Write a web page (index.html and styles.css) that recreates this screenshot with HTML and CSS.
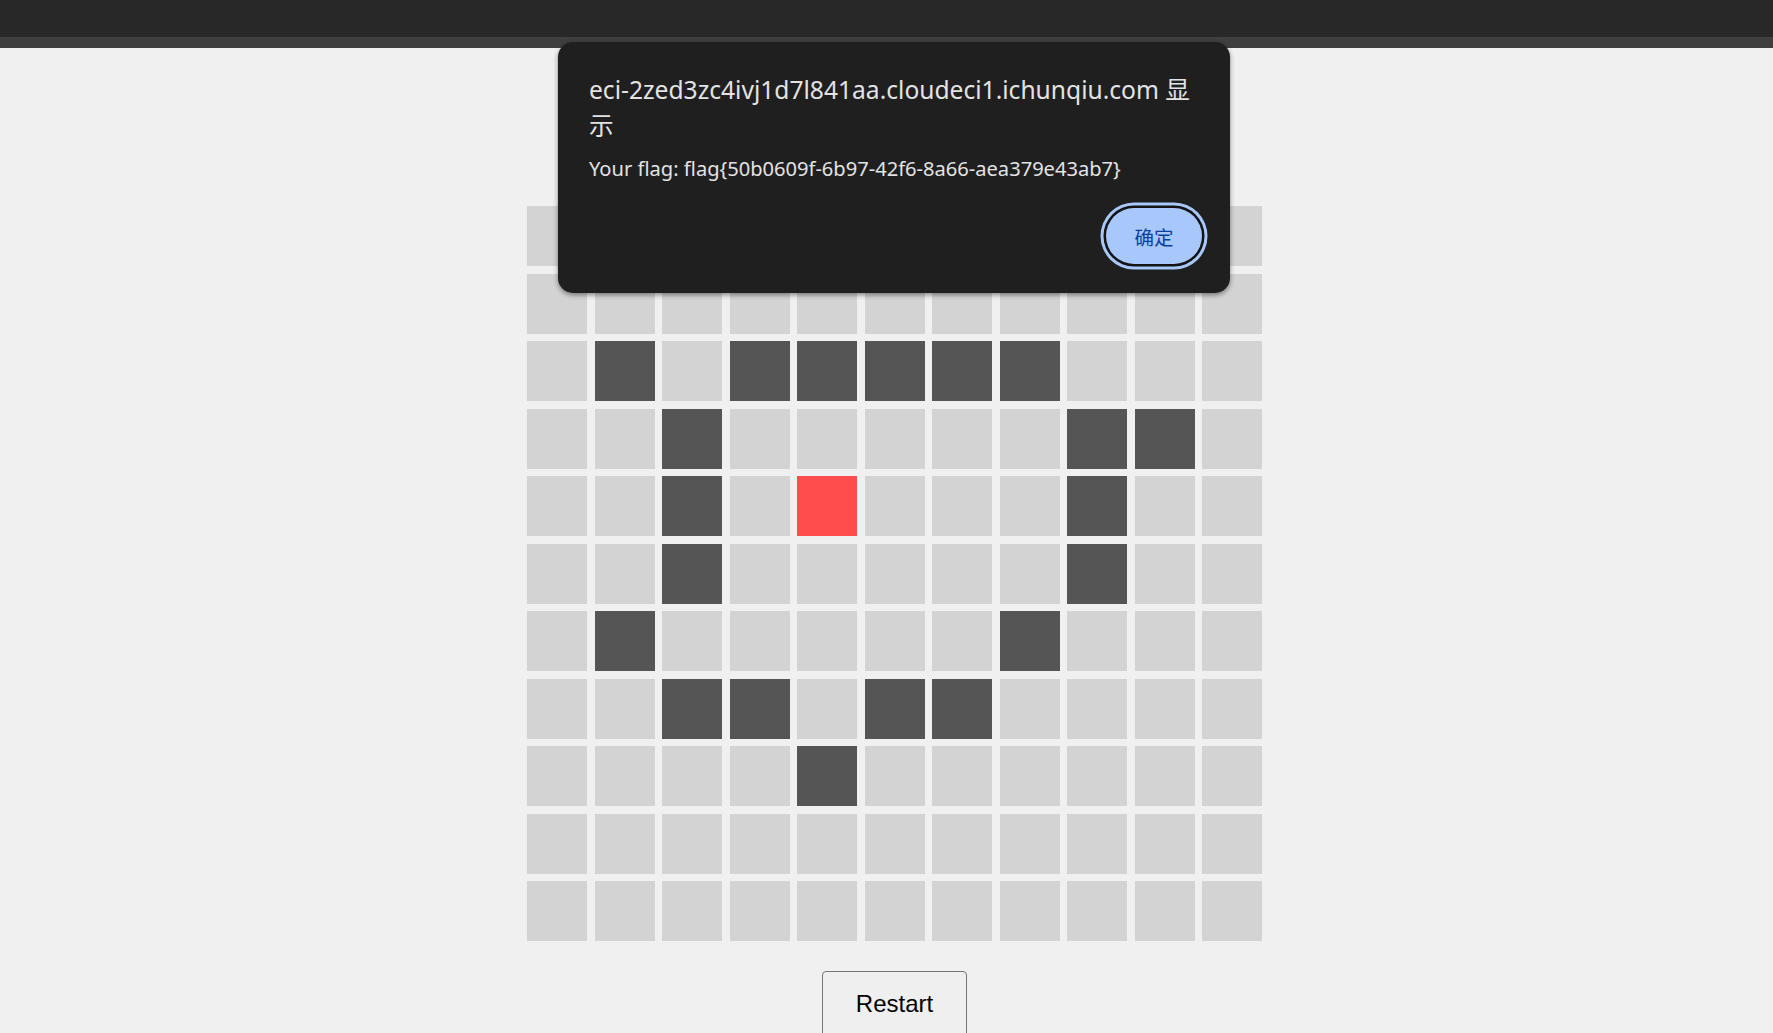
FILE: index.html
```html
<!DOCTYPE html>
<html lang="zh">
<head>
<meta charset="utf-8">
<title>Game</title>
<link rel="stylesheet" href="styles.css">
</head>
<body>
<div class="topbar"></div>
<div class="strip"></div>
<main class="main">
  <div class="grid">
    <div class="cell"></div><div class="cell"></div><div class="cell"></div><div class="cell"></div><div class="cell"></div><div class="cell"></div><div class="cell"></div><div class="cell"></div><div class="cell"></div><div class="cell"></div><div class="cell"></div>
    <div class="cell"></div><div class="cell"></div><div class="cell"></div><div class="cell"></div><div class="cell"></div><div class="cell"></div><div class="cell"></div><div class="cell"></div><div class="cell"></div><div class="cell"></div><div class="cell"></div>
    <div class="cell"></div><div class="cell wall"></div><div class="cell"></div><div class="cell wall"></div><div class="cell wall"></div><div class="cell wall"></div><div class="cell wall"></div><div class="cell wall"></div><div class="cell"></div><div class="cell"></div><div class="cell"></div>
    <div class="cell"></div><div class="cell"></div><div class="cell wall"></div><div class="cell"></div><div class="cell"></div><div class="cell"></div><div class="cell"></div><div class="cell"></div><div class="cell wall"></div><div class="cell wall"></div><div class="cell"></div>
    <div class="cell"></div><div class="cell"></div><div class="cell wall"></div><div class="cell"></div><div class="cell cat"></div><div class="cell"></div><div class="cell"></div><div class="cell"></div><div class="cell wall"></div><div class="cell"></div><div class="cell"></div>
    <div class="cell"></div><div class="cell"></div><div class="cell wall"></div><div class="cell"></div><div class="cell"></div><div class="cell"></div><div class="cell"></div><div class="cell"></div><div class="cell wall"></div><div class="cell"></div><div class="cell"></div>
    <div class="cell"></div><div class="cell wall"></div><div class="cell"></div><div class="cell"></div><div class="cell"></div><div class="cell"></div><div class="cell"></div><div class="cell wall"></div><div class="cell"></div><div class="cell"></div><div class="cell"></div>
    <div class="cell"></div><div class="cell"></div><div class="cell wall"></div><div class="cell wall"></div><div class="cell"></div><div class="cell wall"></div><div class="cell wall"></div><div class="cell"></div><div class="cell"></div><div class="cell"></div><div class="cell"></div>
    <div class="cell"></div><div class="cell"></div><div class="cell"></div><div class="cell"></div><div class="cell wall"></div><div class="cell"></div><div class="cell"></div><div class="cell"></div><div class="cell"></div><div class="cell"></div><div class="cell"></div>
    <div class="cell"></div><div class="cell"></div><div class="cell"></div><div class="cell"></div><div class="cell"></div><div class="cell"></div><div class="cell"></div><div class="cell"></div><div class="cell"></div><div class="cell"></div><div class="cell"></div>
    <div class="cell"></div><div class="cell"></div><div class="cell"></div><div class="cell"></div><div class="cell"></div><div class="cell"></div><div class="cell"></div><div class="cell"></div><div class="cell"></div><div class="cell"></div><div class="cell"></div>
  </div>
  <button class="restart" type="button">Restart</button>
</main>
<div class="dialog" role="alertdialog">
  <div class="dialog-title">eci-2zed3zc4ivj1d7l841aa.cloudeci1.ichunqiu.com 显<br>示</div>
  <div class="dialog-msg">Your flag: flag{50b0609f-6b97-42f6-8a66-aea379e43ab7}</div>
  <div class="dialog-actions"><button class="ok" type="button">确定</button></div>
</div>
</body>
</html>
```
FILE: styles.css
```css
html, body {
  margin: 0;
  padding: 0;
}
body {
  background: #f0f0f0;
  font-family: "Liberation Sans", Arial, sans-serif;
  height: 1033px;
  overflow: hidden;
  position: relative;
}
.topbar {
  height: 37px;
  background: #282828;
}
.strip {
  height: 11px;
  background: #3f3f3f;
}
.main {
  display: flex;
  flex-direction: column;
  align-items: center;
  padding-left: 16px;
  padding-top: 158px;
}
.grid {
  display: grid;
  grid-template-columns: repeat(11, 60px);
  grid-auto-rows: 60px;
  gap: 7.5px;
}
.cell {
  background: #d3d3d3;
}
.cell.wall {
  background: #555555;
}
.cell.cat {
  background: #ff4d4d;
}
.restart {
  margin-top: 30px;
  font-family: "Liberation Sans", Arial, sans-serif;
  font-size: 24px;
  color: #000;
  padding: 18px 33px 18px;
  background: #efefef;
  border: 1.5px solid #767676;
  border-radius: 4px;
}
.dialog {
  position: absolute;
  left: 558px;
  top: 42px;
  width: 672px;
  height: 251px;
  box-sizing: border-box;
  padding: 30px 28px 29px 31px;
  background: #1f1f1f;
  border-radius: 15px;
  box-shadow: 0 2px 5px rgba(0, 0, 0, 0.45);
  color: #e3e3e3;
  font-family: "Noto Sans", "Noto Sans CJK SC", sans-serif;
  display: flex;
  flex-direction: column;
}
.dialog-title {
  font-size: 24.6px;
  line-height: 36px;
}
.dialog-msg {
  margin-top: 10px;
  font-size: 20.1px;
  line-height: 30px;
}
.dialog-actions {
  margin-top: auto;
  display: flex;
  justify-content: flex-end;
}
.ok {
  width: 96px;
  height: 56px;
  border: none;
  border-radius: 28px;
  background: #a8c7fa;
  color: #0842a0;
  font-family: "Noto Sans CJK SC", sans-serif;
  font-size: 19.5px;
  box-shadow: 0 0 0 2.5px #141414, 0 0 0 5.5px #a8c7fa;
}
```
